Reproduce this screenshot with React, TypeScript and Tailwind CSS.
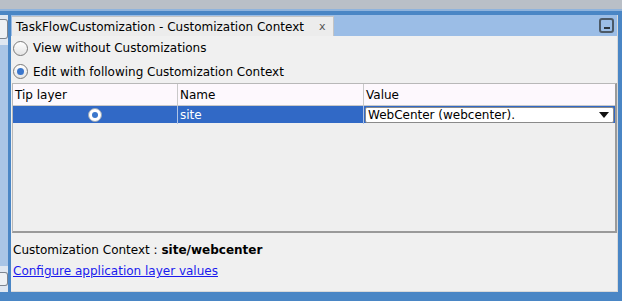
import React from "react";

function Radio({ checked }: { checked?: boolean }) {
  return (
    <span className="w-[15px] h-[15px] rounded-full border border-[#7a7a7a] bg-gradient-to-b from-[#ffffff] to-[#e4e4e4] flex items-center justify-center shrink-0">
      {checked && <span className="w-[7px] h-[7px] rounded-full bg-[#3a76cc]" />}
    </span>
  );
}

export default function App() {
  return (
    <div className="w-[622px] h-[301px] flex flex-col bg-[#4a86c5] font-['DejaVu_Sans',sans-serif] text-[12px] text-black overflow-hidden">
      <div className="h-[11px] bg-[#b9bfc7] border-b-2 border-[#8fb3dc] shrink-0" />
      <div className="flex flex-1 pt-[4px] pb-[9px] pr-[4px] min-h-0">
        {/* left sliver of neighbouring panel */}
        <div className="w-[8px] flex flex-col bg-[#dfe7f1]">
          <div className="h-[20px] mt-[4px] border border-[#7d8590] rounded-r-[3px] border-l-0 bg-[#eef1f4]" />
          <div className="flex-1 bg-[#a9c5e6] my-[6px]" />
          <div className="h-[14px] mb-[6px] border border-[#7d8590] rounded-r-[3px] border-l-0 bg-[#eef1f4]" />
        </div>
        <div className="ml-[3px] flex-1 flex flex-col bg-[#f0f0f0] border-r border-b border-[#d9d9d9]">
          {/* tab strip */}
          <div className="h-[21px] flex items-end bg-[#9bbde6] shrink-0">
            <div className="ml-[1px] w-[322px] h-[20px] bg-[#ececec] border-t border-r border-[#c4c4c4] flex items-center pl-[4px]">
              <span className="whitespace-nowrap">TaskFlowCustomization - Customization Context</span>
              <span className="ml-[15px] text-[11px] text-[#555] leading-none">x</span>
            </div>
            <div className="flex-1 self-stretch flex items-center justify-end pr-[3px]">
              <div className="w-[15px] h-[15px] rounded-[3px] border-2 border-[#4c5966] flex items-end justify-center pb-[2px]">
                <div className="w-[6px] h-[2px] bg-[#2c3640]" />
              </div>
            </div>
          </div>
          {/* radios */}
          <div className="flex flex-col pl-[2px] pt-[1px]">
            <label className="flex items-center gap-[5px] h-[22px]">
              <Radio />
              <span>View without Customizations</span>
            </label>
            <label className="flex items-center gap-[5px] h-[23px] mt-[1px]">
              <Radio checked />
              <span>Edit with following Customization Context</span>
            </label>
          </div>
          {/* table */}
          <div className="ml-[1px] h-[150px] flex flex-col border-t border-l border-[#b8b8b8] border-b-2 border-b-[#9a9a9a] border-r-2 border-r-[#9a9a9a] bg-[#efefef]">
            <div className="grid grid-cols-[165px_186px_1fr] h-[22px] bg-[#fdf8fd] border-b border-[#c9c9c9]">
              <div className="flex items-center pl-[2px] border-r border-[#c9c9c9]">Tip layer</div>
              <div className="flex items-center pl-[2px] border-r border-[#c9c9c9]">Name</div>
              <div className="flex items-center pl-[2px]">Value</div>
            </div>
            <div className="grid grid-cols-[165px_186px_1fr] h-[17px] bg-[#3169c6] text-white">
              <div className="flex items-center justify-center border-r border-[#b0c4e6]">
                <span className="w-[14px] h-[14px] rounded-full bg-white border border-[#9aa6b6] flex items-center justify-center">
                  <span className="w-[6px] h-[6px] rounded-full bg-[#3a76cc]" />
                </span>
              </div>
              <div className="flex items-center pl-[2px] border-r border-[#b0c4e6]">site</div>
              <div className="flex items-center pl-[1px] pr-[1px]">
                <div className="flex-1 h-[16px] bg-white text-black border border-[#8a8a8a] rounded-[2px] flex items-center pl-[2px] pr-[4px]">
                  <span className="flex-1 whitespace-nowrap">WebCenter (webcenter).</span>
                  <svg width="10" height="6" viewBox="0 0 10 6">
                    <path d="M0 0 L10 0 L5 6 Z" fill="#111" />
                  </svg>
                </div>
              </div>
            </div>
          </div>
          {/* footer */}
          <div className="pl-[2px] pt-[7px] flex flex-col">
            <div className="h-[20px] flex items-center whitespace-nowrap">
              Customization Context :&nbsp;<span className="font-bold">site/webcenter</span>
            </div>
            <a href="#" className="h-[22px] flex items-center text-[#1a1aee] underline whitespace-nowrap">
              Configure application layer values
            </a>
          </div>
        </div>
      </div>
    </div>
  );
}
